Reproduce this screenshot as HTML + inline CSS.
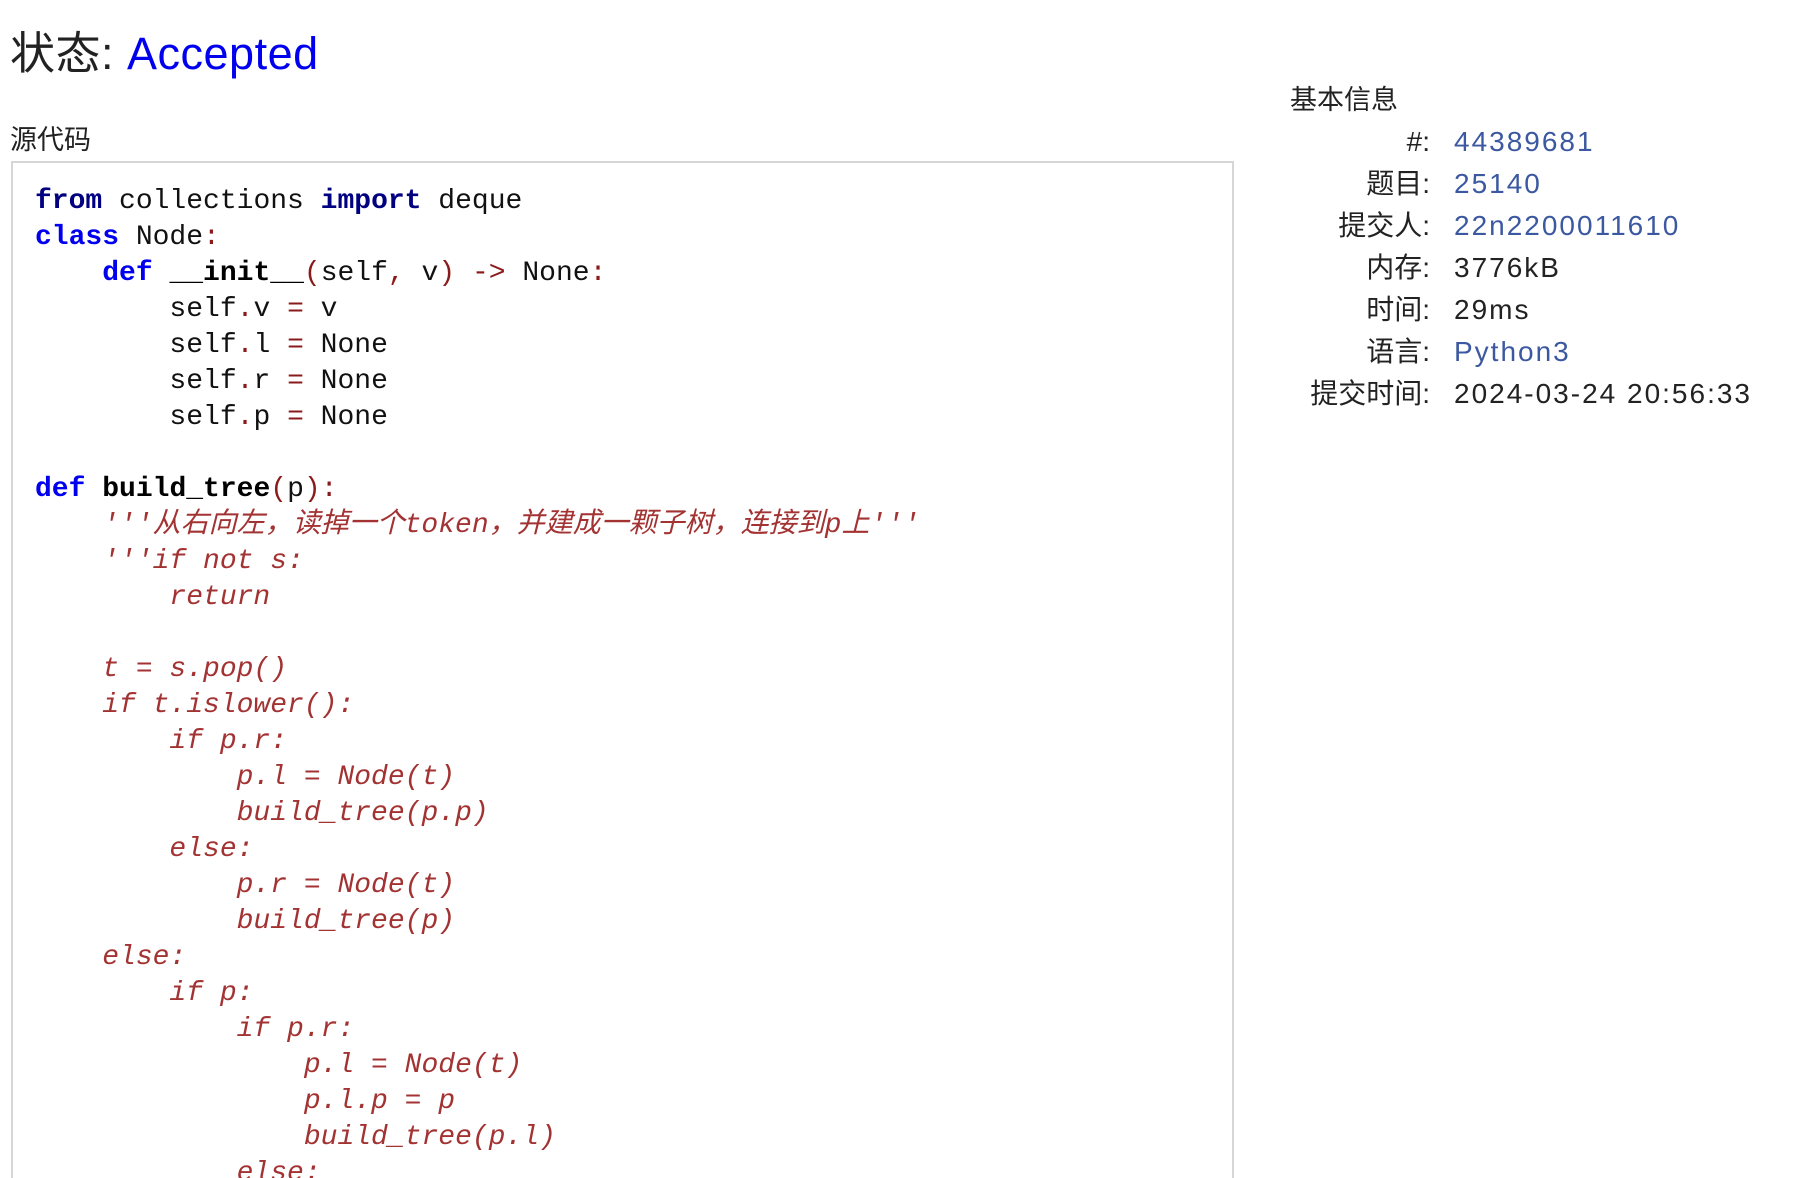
<!DOCTYPE html>
<html><head><meta charset="utf-8"><style>
html{overflow:hidden;height:1178px}
body{margin:0;background:#fff;width:1812px;height:1178px;overflow:hidden;position:relative;font-family:"Liberation Sans","Noto Sans CJK SC",sans-serif;color:#222}
h1{position:absolute;left:10px;top:22px;margin:0;font-size:45px;font-weight:normal;line-height:64px;letter-spacing:0.5px}
h1 span{color:#0000ee}
.src{position:absolute;left:10px;top:120px;font-size:27px;line-height:40px}
.box{position:absolute;left:11px;top:161px;width:1223px;height:1030px;border:2px solid #d6d6d6;border-bottom:none;box-sizing:border-box}
pre{margin:0;position:absolute;left:35px;top:184px;font-family:"Liberation Mono","Noto Sans CJK SC",monospace;font-size:28px;line-height:36px;color:#111}
.k{color:#000080;font-weight:bold}.b{color:#0000ee;font-weight:bold}.f{font-weight:bold;color:#000}.o{color:#8b1a1a}.c{color:#a33333;font-style:italic}
.info{position:absolute;left:1290px;top:80px;font-size:27px;line-height:40px}
table{position:absolute;left:1284px;top:121px;border-collapse:collapse;font-size:28px}
td{padding:0;height:42px;line-height:42px;letter-spacing:2px}
td.l{text-align:right;width:146px;padding-right:24px;letter-spacing:0}
a{color:#3b58a0;text-decoration:none}
</style></head><body>
<h1>状态: <span>Accepted</span></h1>
<div class="src">源代码</div>
<div class="box"></div>
<pre><span class="k">from</span> collections <span class="k">import</span> deque
<span class="b">class</span> Node<span class="o">:</span>
    <span class="b">def</span> <span class="f">__init__</span><span class="o">(</span>self<span class="o">,</span> v<span class="o">)</span> <span class="o">-&gt;</span> None<span class="o">:</span>
        self<span class="o">.</span>v <span class="o">=</span> v
        self<span class="o">.</span>l <span class="o">=</span> None
        self<span class="o">.</span>r <span class="o">=</span> None
        self<span class="o">.</span>p <span class="o">=</span> None

<span class="b">def</span> <span class="f">build_tree</span><span class="o">(</span>p<span class="o">):</span>
<span class="c">    '''从右向左，读掉一个token，并建成一颗子树，连接到p上'''
    '''if not s:
        return

    t = s.pop()
    if t.islower():
        if p.r:
            p.l = Node(t)
            build_tree(p.p)
        else:
            p.r = Node(t)
            build_tree(p)
    else:
        if p:
            if p.r:
                p.l = Node(t)
                p.l.p = p
                build_tree(p.l)
            else:</span></pre>
<div class="info">基本信息</div>
<table>
<tr><td class="l">#:</td><td><a>44389681</a></td></tr>
<tr><td class="l">题目:</td><td><a>25140</a></td></tr>
<tr><td class="l">提交人:</td><td><a>22n2200011610</a></td></tr>
<tr><td class="l">内存:</td><td>3776kB</td></tr>
<tr><td class="l">时间:</td><td>29ms</td></tr>
<tr><td class="l">语言:</td><td><a>Python3</a></td></tr>
<tr><td class="l">提交时间:</td><td>2024-03-24 20:56:33</td></tr>
</table>
</body></html>
